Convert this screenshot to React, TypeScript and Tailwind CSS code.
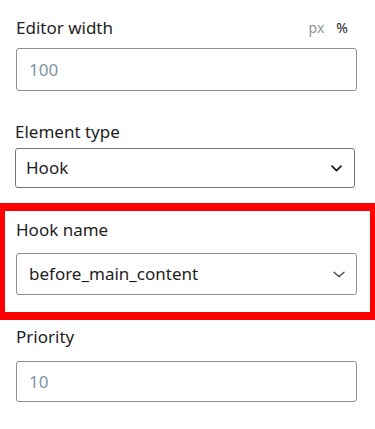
const font = { fontFamily: '"Noto Sans", "Open Sans", sans-serif' };

function Chevron({ className, strokeWidth, w }: { className: string; strokeWidth: number; w: number }) {
  return (
    <svg width={w} height="7" viewBox={`0 0 ${w} 7`} className={className} fill="none">
      <path d={`M1 1.2 L${w / 2} 5.6 L${w - 1} 1.2`} stroke="currentColor" strokeWidth={strokeWidth} strokeLinecap="round" strokeLinejoin="round" />
    </svg>
  );
}

export default function App() {
  return (
    <div className="w-[375px] h-[429px] bg-white overflow-hidden text-[#1e1e1e]" style={font}>
      {/* editor width */}
      <div className="pl-4 pr-[18px] pt-4">
        <div className="flex items-center justify-between leading-[24px]">
          <span className="text-[17px]">Editor width</span>
          <div className="flex items-center gap-3 text-[14px] pr-[9px]">
            <span className="text-[#949494]">px</span>
            <span className="text-[#1e1e1e]">%</span>
          </div>
        </div>
        <div className="mt-2 h-[43px] rounded-[3px] border-[1.5px] border-[#8c8f94] flex items-center pl-[12px]">
          <span className="text-[17px] text-[#7f94a3]">100</span>
        </div>
      </div>

      {/* element type */}
      <div className="pl-[15px] pr-5 mt-[29px]">
        <div className="leading-[24px] text-[17px]">Element type</div>
        <div className="mt-1 h-[40px] rounded-[3px] border-[1.5px] border-[#757575] flex items-center justify-between pl-[10px] pr-[12px]">
          <span className="text-[17px]">Hook</span>
          <Chevron className="text-[#1e1e1e]" strokeWidth={1.8} w={11} />
        </div>
      </div>

      {/* hook name, highlighted */}
      <div className="mt-[15px] border-y-8 border-x-[5px] border-[#ff0000] pl-[11px] pr-[13px] pt-[7px] pb-[17px]">
        <div className="leading-[24px] text-[17px]">Hook name</div>
        <div className="mt-[11px] h-[42px] rounded-[3px] border-[1.5px] border-[#8c8f94] flex items-center justify-between pl-[12px] pr-[11px]">
          <span className="text-[17px]">before_main_content</span>
          <Chevron className="text-[#50575e]" strokeWidth={1.5} w={12} />
        </div>
      </div>

      {/* priority */}
      <div className="pl-4 pr-[18px] mt-[5px]">
        <div className="leading-[24px] text-[17px]">Priority</div>
        <div className="mt-[12px] h-[41px] rounded-[3px] border-[1.5px] border-[#8c8f94] flex items-center pl-[12px]">
          <span className="text-[17px] text-[#7f94a3]">10</span>
        </div>
      </div>
    </div>
  );
}
